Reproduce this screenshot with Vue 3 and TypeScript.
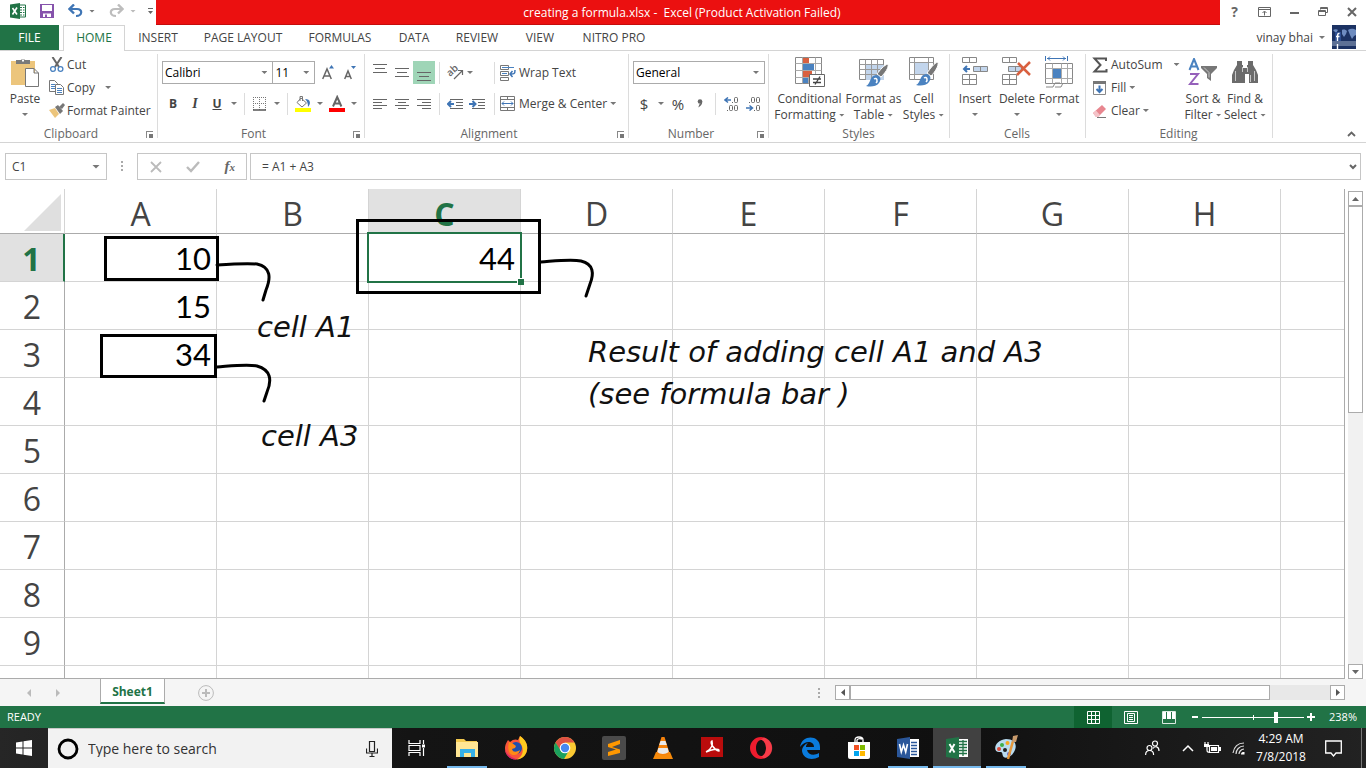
<script setup lang="ts">
import { ref } from 'vue'

const tabs = [
  { name: 'HOME', cls: 'tab-active' },
  { name: 'INSERT', cls: 'tab-m' },
  { name: 'PAGE LAYOUT', cls: 'tab-xl' },
  { name: 'FORMULAS', cls: 'tab-l' },
  { name: 'DATA', cls: 'tab-s' },
  { name: 'REVIEW', cls: 'tab-m2' },
  { name: 'VIEW', cls: 'tab-s' },
  { name: 'NITRO PRO', cls: 'tab-l' },
]
const columns = ['A', 'B', 'C', 'D', 'E', 'F', 'G', 'H', '']
const rows = [1, 2, 3, 4, 5, 6, 7, 8, 9]
const values: Record<string, string> = { A1: '10', A2: '15', A3: '34', C1: '44' }

const fontName = ref('Calibri')
const fontSize = ref('11')
const numberFormat = ref('General')
const nameBox = ref('C1')
const formula = ref('= A1 + A3')
const search = ref('')
const zoom = ref(73)
</script>

<template>
  <div class="app">
    <header class="titlebar">
      <div class="quick">
        <svg class="xl-logo" width="16" height="16" viewBox="0 0 16 16">
          <path d="M9 2h6.500v12H9z" fill="#fff" stroke="#217346" />
          <path d="M10 4.500h2M10 7h2M10 9.500h2M10 12h2M13 4.500h1.500M13 7h1.500M13 9.500h1.500M13 12h1.500" stroke="#217346" />
          <path d="M0 1.500 10 0v16L0 14.500z" fill="#217346" />
          <path d="M2.500 5 7 11.500M7 4.500 2.500 11.500" stroke="#fff" stroke-width="1.600" />
        </svg>
        <button class="plain save" aria-label="Save">
          <svg width="14" height="14" viewBox="0 0 14 14">
            <path d="M0 0h14v14H0z" fill="#8653ac" />
            <path d="M2 1h10v6H2z" fill="#fff" />
            <path d="M3 9.500h8V13H3z" fill="#fff" />
            <path d="M5 10.500h2V13H5z" fill="#8653ac" />
          </svg>
        </button>
        <button class="plain undo" aria-label="Undo">
          <svg width="15" height="14" viewBox="0 0 15 14">
            <path d="M1.500 5H9c6 0 5.500 7-1 7" fill="none" stroke="#3f75b5" stroke-width="2.200" />
            <path d="M6 .500 1.500 5 6 9.500" fill="none" stroke="#3f75b5" stroke-width="2.400" />
          </svg>
          <i class="caret"></i>
        </button>
        <button class="plain redo" aria-label="Redo">
          <svg width="15" height="14" viewBox="0 0 15 14">
            <path d="M13.500 5H6c-6 0-5.500 7 1 7" fill="none" stroke="#bdbdbd" stroke-width="2.200" />
            <path d="M9 .500 13.500 5 9 9.500" fill="none" stroke="#bdbdbd" stroke-width="2.400" />
          </svg>
          <i class="caret light"></i>
        </button>
        <button class="plain custom" aria-label="Customize Quick Access Toolbar">
          <svg width="5" height="6" viewBox="0 0 5 6"><path d="M0 0h5v1H0zM0 3h5L2.500 6z" fill="#666" /></svg>
        </button>
      </div>
      <div class="title">creating a formula.xlsx -&nbsp; Excel (Product Activation Failed)</div>
      <div class="winbtns">
        <button class="plain help" aria-label="Help">?</button>
        <button class="plain" aria-label="Ribbon display options">
          <svg width="13" height="10" viewBox="0 0 13 10"><path d="M.500.500h12v9H.500zM.500 2.500h12M6.500 8.500v-4M4.500 6l2-2 2 2" fill="none" stroke="#666" /></svg>
        </button>
        <button class="plain" aria-label="Minimize">
          <svg width="10" height="10" viewBox="0 0 10 10"><path d="M0 5h9v2H0z" fill="#666" /></svg>
        </button>
        <button class="plain" aria-label="Restore">
          <svg width="10" height="10" viewBox="0 0 10 10"><path d="M2.500 2.500v-2h7v5h-2M2.500 1.500h7M.500 3.500h7v5h-7zM.500 4.500h7" fill="none" stroke="#666" /></svg>
        </button>
        <button class="plain" aria-label="Close">
          <svg width="10" height="10" viewBox="0 0 10 10"><path d="m1 1 8 8M9 1 1 9" stroke="#666" stroke-width="2" /></svg>
        </button>
      </div>
    </header>

    <nav class="tabs">
      <button class="file">FILE</button>
      <button v-for="t in tabs" :key="t.name" class="tab" :class="t.cls">{{ t.name }}</button>
      <button class="plain user">vinay bhai <i class="caret"></i></button>
      <svg class="avatar" width="24" height="24" viewBox="0 0 24 24">
        <path d="M0 0h24v24H0z" fill="#1c3263" />
        <path d="M0 16h24v5H0z" fill="#5d7095" />
        <path d="M10 5c2-1 4 0 5 1l-1 3-2 3-2-3zM16 5c3-2 6-1 8 0v5l-2 1-2 3-2-4zM1 5c2-1 4-1 5 0L4 8z" fill="#6e8cc0" />
        <path d="M3 7h6v9H3z" fill="#2e4f91" />
        <path d="M7.500 8.500C5.500 8 5.500 9.500 5.500 16M4 11.500h3.500M5.500 19v5" stroke="#fff" stroke-width="1.400" fill="none" />
      </svg>
    </nav>

    <section class="ribbon">
      <div class="group g-clip">
        <div class="body">
          <button class="big paste">
            <span class="bigicon">
              <svg width="28" height="30" viewBox="0 0 28 30">
                <path d="M0 4h24v24H0z" fill="#ecc57c" />
                <path d="M5 3h5a2.500 2.500 0 0 1 4 0h5v4H5z" fill="#7a7a7a" />
                <path d="M11 2.500h2v2h-2z" fill="#fff" />
                <path d="M14.500 11.500H23l4.500 4.500v13.500h-13zM23 11.500V16h4.500" fill="#fff" stroke="#777" />
              </svg>
            </span>
            <span>Paste</span><i class="caret"></i>
          </button>
          <div class="list">
            <button class="small">
              <svg width="16" height="16" viewBox="0 0 16 16">
                <path d="M3.500 0 10 10M12.500 0 6 10" stroke="#666" stroke-width="2" />
                <circle cx="4" cy="12" r="2.400" fill="none" stroke="#4a82c0" stroke-width="1.300" />
                <circle cx="11.500" cy="12" r="2.400" fill="none" stroke="#4a82c0" stroke-width="1.300" />
              </svg>Cut
            </button>
            <button class="small">
              <svg width="16" height="16" viewBox="0 0 16 16">
                <path d="M.500.500h5l3 3v8h-8z" fill="#fff" stroke="#777" />
                <path d="M2 4.500h4M2 6.500h4M2 8.500h4" stroke="#4a82c0" />
                <path d="M6.500 4.500h5l3 3v7h-8z" fill="#fff" stroke="#777" />
                <path d="M8 8.500h5M8 10.500h5M8 12.500h5" stroke="#4a82c0" />
              </svg>Copy<i class="caret far"></i>
            </button>
            <button class="small">
              <svg width="16" height="16" viewBox="0 0 16 16">
                <path d="m0 7 6-2 4 6-4 4z" fill="#ecc57c" />
                <path d="m6 4 3-2 5 6-3 3z" fill="#777" />
                <path d="m10 4 4-4 2 2-3 4z" fill="#777" />
              </svg>Format Painter
            </button>
          </div>
        </div>
        <footer>Clipboard<i class="launch"></i></footer>
      </div>

      <div class="group g-font">
        <div class="body rowsbody">
          <div class="line">
            <label class="combo fontname"><select v-model="fontName" aria-label="Font"><option>Calibri</option></select><i class="caret"></i></label>
            <label class="combo fontsize"><select v-model="fontSize" aria-label="Font size"><option>11</option></select><i class="caret"></i></label>
            <button class="ic grow" aria-label="Increase font size">
              <svg width="13" height="15" viewBox="0 0 13 15"><path d="M.700 14 5 4l4.300 10M2 11h6" fill="none" stroke="#666" stroke-width="1.500" /><path d="M7 3.500 9.500 0 12 3.500z" fill="#3f75b5" /></svg>
            </button>
            <button class="ic" aria-label="Decrease font size">
              <svg width="13" height="15" viewBox="0 0 13 15"><path d="M.700 14 4 6l3.300 8M2 11.500h4" fill="none" stroke="#666" stroke-width="1.500" /><path d="M7 1h5L9.500 4z" fill="#3f75b5" /></svg>
            </button>
          </div>
          <div class="line">
            <button class="ic"><b>B</b></button>
            <button class="ic"><em>I</em></button>
            <button class="ic"><u>U</u></button>
            <i class="caret c12"></i><i class="sep"></i>
            <button class="ic" aria-label="Borders">
              <svg width="14" height="14" viewBox="0 0 14 14"><path d="M.500 0v13M6.500 0v13M12.500 0v13M0 .500h13M0 6.500h13" stroke="#777" stroke-dasharray="1 1" /><path d="M0 13h13" stroke="#555" stroke-width="1.500" /></svg>
            </button>
            <i class="caret c12"></i><i class="sep"></i>
            <button class="ic" aria-label="Fill color">
              <svg width="16" height="17" viewBox="0 0 16 17"><path d="m6 3 5.500 5L7 12 2 7.500zM5 6V1.500h2.500V6" fill="#fff" stroke="#777" /><path d="M10 4c6 0 6 5 3 8 0-4-1-6-3-8z" fill="#3f75b5" /><path d="M0 13h16v4H0z" fill="#ff0" /></svg>
            </button>
            <i class="caret c12"></i>
            <button class="ic" aria-label="Font color">
              <svg width="16" height="17" viewBox="0 0 16 17"><path d="m4 11.500 4.200-9.500 4.200 9.500M5.500 8.500h5.500" fill="none" stroke="#666" stroke-width="2" /><path d="M0 13h16v4H0z" fill="#f00" /></svg>
            </button>
            <i class="caret c12"></i>
          </div>
        </div>
        <footer>Font<i class="launch"></i></footer>
      </div>

      <div class="group g-align">
        <div class="body rowsbody">
          <div class="line">
            <button class="ic" aria-label="Top align"><svg width="14" height="17" viewBox="0 0 14 17"><path d="M0 .500h14M2 4.500h10M0 8.500h14" stroke="#666" /></svg></button>
            <button class="ic" aria-label="Middle align"><svg width="14" height="17" viewBox="0 0 14 17"><path d="M0 4.500h14M2 8.500h10M0 12.500h14" stroke="#666" /></svg></button>
            <button class="ic on" aria-label="Bottom align"><svg width="14" height="17" viewBox="0 0 14 17"><path d="M0 8.500h14M2 12.500h10M0 16.500h14" stroke="#666" /></svg></button>
            <i class="sep"></i>
            <button class="ic" aria-label="Orientation">
              <svg width="20" height="21" viewBox="0 0 20 21"><text class="ab" x="5" y="15" transform="rotate(-42 5 15)">ab</text><path d="m9 17 8-8M13 8.500h4.500V13" fill="none" stroke="#666" stroke-width="1.200" /></svg>
            </button>
            <i class="caret orient"></i><i class="gapper"></i><i class="sep"></i>
            <button class="small wide">
              <svg width="16" height="16" viewBox="0 0 16 16"><path d="M.500.500v4h8v-4H.500M.500 6.500h8v4h-8zM.500 12.500h8v3h-8z" fill="none" stroke="#777" /><path d="M2 2.500h12M2 8.500h5" stroke="#4a82c0" /><path d="M15 5c0 4-1 4-4 4M12.500 6 10 9l2.500 3" fill="none" stroke="#3f75b5" stroke-width="1.500" /></svg>Wrap Text
            </button>
          </div>
          <div class="line">
            <button class="ic" aria-label="Align left"><svg width="14" height="12" viewBox="0 0 14 12"><path d="M0 1.500h14M0 4.500h9M0 7.500h14M0 10.500h9" stroke="#666" /></svg></button>
            <button class="ic" aria-label="Center"><svg width="14" height="12" viewBox="0 0 14 12"><path d="M0 1.500h14M3 4.500h8M0 7.500h14M3 10.500h8" stroke="#666" /></svg></button>
            <button class="ic" aria-label="Align right"><svg width="14" height="12" viewBox="0 0 14 12"><path d="M0 1.500h14M5 4.500h9M0 7.500h14M5 10.500h9" stroke="#666" /></svg></button>
            <i class="sep"></i>
            <button class="ic" aria-label="Decrease indent"><svg width="16" height="12" viewBox="0 0 16 12"><path d="M3 1.500h13M9 4.500h7M9 7.500h7M3 10.500h13" stroke="#666" /><path d="M7 6H1.500M4 3 1 6l3 3" stroke="#3f75b5" stroke-width="2" fill="none" /></svg></button>
            <button class="ic" aria-label="Increase indent"><svg width="16" height="12" viewBox="0 0 16 12"><path d="M3 1.500h13M9 4.500h7M9 7.500h7M3 10.500h13" stroke="#666" /><path d="M0 6h5.500M3.500 3l3 3-3 3" stroke="#3f75b5" stroke-width="2" fill="none" /></svg></button>
            <i class="gap4"></i><i class="sep"></i>
            <button class="small wide">
              <svg width="16" height="16" viewBox="0 0 16 16"><path d="M.500.500h14v14H.500zM.500 3.500h14M.500 11.500h14M7.500.500v3M7.500 11.500v3" fill="none" stroke="#777" /><path d="M2 7.500h11M4 5.500l-2 2 2 2M11 5.500l2 2-2 2" fill="none" stroke="#3f75b5" /></svg>Merge &amp; Center
            </button>
            <i class="caret c12"></i>
          </div>
        </div>
        <footer>Alignment<i class="launch"></i></footer>
      </div>

      <div class="group g-num">
        <div class="body rowsbody">
          <div class="line">
            <label class="combo numfmt"><select v-model="numberFormat" aria-label="Number format"><option>General</option></select><i class="caret"></i></label>
          </div>
          <div class="line">
            <button class="ic sym">$</button><i class="caret c12"></i>
            <button class="ic sym">%</button>
            <button class="ic comma" aria-label="Comma style">
              <svg width="6" height="9" viewBox="0 0 6 9"><circle cx="3" cy="2.500" r="2.300" fill="#666" /><path d="M5.300 2.500c0 3-1.500 4.500-4 6l1-3z" fill="#666" /></svg>
            </button>
            <i class="sep"></i>
            <button class="ic dec" aria-label="Increase decimal">
              <svg width="15" height="14" viewBox="0 0 15 14"><path d="M7 3H1.500M4 .500 1 3l3 2.500" fill="none" stroke="#3f75b5" stroke-width="1.500" /><g fill="none" stroke="#666"><rect x="10.500" y=".500" width="3" height="5" rx="1" /><rect x="5.500" y="8.500" width="3" height="5" rx="1" /><rect x="10.500" y="8.500" width="3" height="5" rx="1" /></g><path d="M8 5h1v1H8zM3 13h1v1H3z" fill="#666" /></svg>
            </button>
            <button class="ic dec" aria-label="Decrease decimal">
              <svg width="15" height="14" viewBox="0 0 15 14"><path d="M0 11h5.500M3.500 8.500l3 2.500-3 2.500" fill="none" stroke="#3f75b5" stroke-width="1.500" /><g fill="none" stroke="#666"><rect x="5.500" y=".500" width="3" height="5" rx="1" /><rect x="10.500" y=".500" width="3" height="5" rx="1" /><rect x="10.500" y="8.500" width="3" height="5" rx="1" /></g><path d="M3 5h1v1H3zM8 13h1v1H8z" fill="#666" /></svg>
            </button>
          </div>
        </div>
        <footer>Number<i class="launch"></i></footer>
      </div>

      <div class="group g-styles">
        <div class="body">
          <button class="big b72">
            <span class="bigicon">
              <svg width="30" height="30" viewBox="0 0 30 30">
                <path d="M.500.500h26v26H.500z" fill="#fff" stroke="#888" />
                <path d="M.500 6.500h26M.500 13.500h26M.500 20.500h26M7.500.500v26M13.500.500v26M20.500.500v26" stroke="#aaa" />
                <path d="M8 1h6v5H8zM8 14h9v6H8z" fill="#d9603f" /><path d="M8 7h11v6H8zM8 21h5v5H8z" fill="#4a82c0" />
                <path d="M14.500 17.500h15v12h-15z" fill="#fff" stroke="#666" />
                <path d="M18 22h8M18 25.500h8M25 19.500l-5 8" stroke="#444" stroke-width="1.300" />
              </svg>
            </span>
            <span>Conditional</span><span>Formatting<i class="caret"></i></span>
          </button>
          <button class="big b56">
            <span class="bigicon">
              <svg width="30" height="30" viewBox="0 0 30 30">
                <path d="M.500 2.500h24v20H.500z" fill="#fff" stroke="#888" /><path d="M7 8h18v15H7z" fill="#c2d5ec" />
                <path d="M.500 7.500h24M.500 12.500h24M.500 17.500h24M6.500 2.500v20M12.500 2.500v20M18.500 2.500v20" stroke="#999" />
                <path d="M29 7c1 4-3 9-7 13l-4-3c3-4 7-9 11-10z" fill="#777" stroke="#fff" />
                <path d="M17 18c4 0 6 4 3 8-3 4-9 4-13 3 5-2 3-10 10-11z" fill="#4a82c0" /><path d="M15 22c3-2 4 2 2 4" stroke="#fff" stroke-width="1.500" fill="none" />
              </svg>
            </span>
            <span>Format as</span><span>Table<i class="caret"></i></span>
          </button>
          <button class="big b44">
            <span class="bigicon">
              <svg width="30" height="30" viewBox="0 0 30 30">
                <path d="M.500.500h24v22H.500z" fill="#fff" stroke="#888" /><path d="M.500 5.500h24M.500 17.500h24M5.500.500v22M19.500.500v22" stroke="#999" /><path d="M6 6h13v11H6z" fill="#c2d5ec" />
                <path d="M29 5c1 4-3 10-7 14l-4-3c3-4 7-10 11-11z" fill="#777" stroke="#fff" />
                <path d="M17 17c4 0 6 4 3 8-3 4-9 4-13 3 5-2 3-10 10-11z" fill="#4a82c0" /><path d="M15 21c3-2 4 2 2 4" stroke="#fff" stroke-width="1.500" fill="none" />
              </svg>
            </span>
            <span>Cell</span><span>Styles<i class="caret"></i></span>
          </button>
        </div>
        <footer>Styles</footer>
      </div>

      <div class="group g-cells">
        <div class="body">
          <button class="big b42">
            <span class="bigicon">
              <svg width="28" height="30" viewBox="0 0 28 30">
                <path d="M1.500.500h14v5h-14zM8.500.500v5M1.500 17.500h14v10h-14zM8.500 17.500v10M1.500 22.500h14" fill="#fff" stroke="#888" />
                <path d="M12.500 9.500h14v5h-14zM19.500 9.500v5" fill="#c2d5ec" stroke="#888" />
                <path d="M9 12H3M6 9l-3 3 3 3" stroke="#3f75b5" stroke-width="2" fill="none" />
              </svg>
            </span>
            <span>Insert</span><i class="caret"></i>
          </button>
          <button class="big b42">
            <span class="bigicon">
              <svg width="30" height="30" viewBox="0 0 30 30">
                <path d="M.500.500h14v5h-14zM7.500.500v5M.500 17.500h14v10h-14zM7.500 17.500v10M.500 22.500h14" fill="#fff" stroke="#888" />
                <path d="M6.500 9.500h13v5h-13zM13.500 9.500v5" fill="#c2d5ec" stroke="#888" />
                <path d="m16 6 12 12M28 5 15 18" stroke="#d9603f" stroke-width="2.500" fill="none" />
              </svg>
            </span>
            <span>Delete</span><i class="caret"></i>
          </button>
          <button class="big b42">
            <span class="bigicon">
              <svg width="28" height="32" viewBox="0 0 28 32">
                <path d="M.500 0v5M22.500 0v5M2 2.500h19M5 .500l-2 2 2 2M18 .500l2 2-2 2" stroke="#3f75b5" fill="none" />
                <path d="M.500 7.500h27v20H.500z" fill="#fff" stroke="#888" /><path d="M7.500 7.500v20M16.500 7.500v20M22.500 7.500v20M.500 12.500h27M.500 22.500h27" stroke="#aaa" />
                <path d="M8 13h8v9H8z" fill="#4a82c0" /><path d="M1 31h7l2-4h5M10 31h6l2-4" fill="none" stroke="#888" />
              </svg>
            </span>
            <span>Format</span><i class="caret"></i>
          </button>
        </div>
        <footer>Cells</footer>
      </div>

      <div class="group g-edit">
        <div class="body">
          <div class="list editlist">
            <button class="small">
              <svg width="16" height="16" viewBox="0 0 16 16"><path d="M14 4V1.500H2.500L8.500 8l-6 6.500H14.500V12" fill="none" stroke="#555" stroke-width="2" /></svg>AutoSum<i class="caret far"></i>
            </button>
            <button class="small">
              <svg width="16" height="16" viewBox="0 0 16 16"><path d="M1.500 1.500h12v13h-12z" fill="#fff" stroke="#888" /><path d="M1 1h13v3H1z" fill="#777" /><path d="M7.500 5.500V12M4.500 9l3 3 3-3" stroke="#3f75b5" stroke-width="2" fill="none" /></svg>Fill<i class="caret near"></i>
            </button>
            <button class="small">
              <svg width="16" height="16" viewBox="0 0 16 16"><path d="m1 10 9-8 4 4-8 8H4z" fill="#e8868f" /><path d="m1 10 3-2.500L8 12l-2 2H4z" fill="#f4c3c8" /><path d="M5 14.500h9" stroke="#777" /></svg>Clear<i class="caret near"></i>
            </button>
          </div>
          <button class="big b42">
            <span class="bigicon">
              <svg width="30" height="28" viewBox="0 0 30 28">
                <path d="m1.500 12 4.500-11 4.500 11M3 8.500h6" fill="none" stroke="#4a82c0" stroke-width="2" />
                <path d="M2 16h8L2 26h8.500" fill="none" stroke="#9560ba" stroke-width="2" />
                <path d="M13 8h16v2l-6 6v7l-4-3v-4l-6-6z" fill="#777" />
                <path d="m16 9.500 5 5v5" fill="none" stroke="#c6c6c6" />
              </svg>
            </span>
            <span>Sort &amp;</span><span>Filter<i class="caret"></i></span>
          </button>
          <button class="big b42">
            <span class="bigicon">
              <svg width="26" height="26" viewBox="0 0 26 26">
                <path d="M5 2h5v4h1v3h4V6h1V2h5v4l3 5 2 5v8h-9v-9h-4v9H0v-8l2-5 3-5z" fill="#6b6b6b" />
                <path d="M3.500 12v10M10.500 8v5M15.500 8v5M18.500 16v7M22.500 12v10" stroke="#c6c6c6" />
              </svg>
            </span>
            <span>Find &amp;</span><span>Select<i class="caret"></i></span>
          </button>
        </div>
        <footer>Editing</footer>
      </div>
      <button class="plain collapse" aria-label="Collapse the ribbon">
        <svg width="9" height="6" viewBox="0 0 9 6"><path d="m1 5 3.500-3.500L8 5" fill="none" stroke="#666" stroke-width="1.800" /></svg>
      </button>
    </section>

    <section class="formulabar">
      <label class="namebox"><input v-model="nameBox" aria-label="Name box" /><i class="caret big-caret"></i></label>
      <i class="dots"></i>
      <div class="fxbox">
        <button class="plain" aria-label="Cancel"><svg width="12" height="12" viewBox="0 0 12 12"><path d="m1 1 10 10M11 1 1 11" stroke="#bbb" stroke-width="1.800" /></svg></button>
        <button class="plain" aria-label="Enter"><svg width="14" height="12" viewBox="0 0 14 12"><path d="m1 6 4 4 8-9" fill="none" stroke="#bbb" stroke-width="2.400" /></svg></button>
        <button class="plain fx" aria-label="Insert function">f<small>x</small></button>
      </div>
      <label class="formula"><input v-model="formula" aria-label="Formula" />
        <svg width="8" height="6" viewBox="0 0 8 6"><path d="m1 1 3 3 3-3" fill="none" stroke="#666" stroke-width="2" /></svg>
      </label>
    </section>

    <main class="sheet">
      <div class="gridwrap">
        <table>
          <thead>
            <tr>
              <th class="corner"><svg width="37" height="37" viewBox="0 0 37 37"><path d="M37 0v37H0z" fill="#dfdfdf" /></svg></th>
              <th v-for="c in columns" :key="c" scope="col" :class="{ sel: c === 'C', rest: !c }">{{ c }}</th>
            </tr>
          </thead>
          <tbody>
            <tr v-for="r in rows" :key="r">
              <th scope="row" :class="{ sel: r === 1 }">{{ r }}</th>
              <td v-for="c in columns" :key="c" :class="{ active: c + r === 'C1' }">{{ values[c + r] }}</td>
            </tr>
            <tr>
              <th></th>
              <td v-for="c in columns" :key="c"></td>
            </tr>
          </tbody>
        </table>
        <svg class="ink" width="620" height="220" viewBox="0 0 620 220">
          <g fill="none" stroke="#000" stroke-width="3">
            <rect x="105.500" y="48.500" width="112" height="42" />
            <rect x="101.500" y="146.500" width="114" height="41" />
            <rect x="357.500" y="31.500" width="182" height="72" />
            <g stroke-linecap="round">
              <path d="M217 76c14-1 30-2 40-1 14 3 14 14 9 26l-3 10" />
              <path d="M217 178c14-1 30-3 40-1 14 4 15 14 10 26l-3 9" />
              <path d="M541 73c14-1 30-3 40-1 13 3 13 13 9 23l-4 12" />
            </g>
          </g>
        </svg>
        <p class="note n1">cell A1</p>
        <p class="note n2">cell A3</p>
        <p class="note n3">Result of adding cell A1 and A3<br />(see formula bar )</p>
      </div>
      <div class="vscroll">
        <button class="sb" aria-label="Scroll up"><svg width="7" height="4" viewBox="0 0 7 4"><path d="M3.500 0 7 4H0z" fill="#666" /></svg></button>
        <div class="vtrack"><div class="vthumb"></div></div>
        <button class="sb down" aria-label="Scroll down"><svg width="7" height="4" viewBox="0 0 7 4"><path d="M0 0h7L3.500 4z" fill="#666" /></svg></button>
      </div>
    </main>

    <section class="sheettabs">
      <button class="plain nav1" aria-label="Previous sheet"><svg width="4" height="8" viewBox="0 0 4 8"><path d="M4 0v8L0 4z" fill="#bbb" /></svg></button>
      <button class="plain nav2" aria-label="Next sheet"><svg width="4" height="8" viewBox="0 0 4 8"><path d="M0 0v8l4-4z" fill="#bbb" /></svg></button>
      <button class="sheettab">Sheet1</button>
      <button class="plain add" aria-label="New sheet"><svg width="16" height="16" viewBox="0 0 16 16"><circle cx="8" cy="8" r="7.400" fill="none" stroke="#bbb" /><path d="M8 4v8M4 8h8" stroke="#bbb" stroke-width="2" /></svg></button>
      <i class="dots"></i>
      <div class="hscroll">
        <button class="sb" aria-label="Scroll left"><svg width="4" height="7" viewBox="0 0 4 7"><path d="M4 0v7L0 3.500z" fill="#555" /></svg></button>
        <div class="hthumb"></div>
        <button class="sb right" aria-label="Scroll right"><svg width="4" height="7" viewBox="0 0 4 7"><path d="M0 0v7l4-3.500z" fill="#555" /></svg></button>
      </div>
    </section>

    <section class="status">
      <span class="ready">READY</span>
      <button class="view on" aria-label="Normal view"><svg width="13" height="13" viewBox="0 0 13 13"><path d="M.500.500h12v12H.500zM4.500.500v12M8.500.500v12M.500 4.500h12M.500 8.500h12" fill="none" stroke="#fff" /></svg></button>
      <button class="view" aria-label="Page layout view"><svg width="14" height="13" viewBox="0 0 14 13"><path d="M.500.500h13v12H.500zM3.500 2.500h7v8h-7zM5 4.500h4M5 6.500h4M5 8.500h4" fill="none" stroke="#fff" /></svg></button>
      <button class="view" aria-label="Page break preview"><svg width="14" height="13" viewBox="0 0 14 13"><path d="M.500.500h13v12H.500z" fill="none" stroke="#dceae2" /><path d="M1 1h3v7H1zM5 1h4v7H5zM10 1h3v7h-3z" fill="#fff" /></svg></button>
      <button class="plain zbtn" aria-label="Zoom out"><svg width="6" height="8" viewBox="0 0 6 8"><path d="M0 3h6v2H0z" fill="#fff" /></svg></button>
      <input v-model="zoom" class="zoom" type="range" min="0" max="100" aria-label="Zoom" />
      <button class="plain zbtn" aria-label="Zoom in"><svg width="8" height="8" viewBox="0 0 8 8"><path d="M3 0h2v3h3v2H5v3H3V5H0V3h3z" fill="#fff" /></svg></button>
      <button class="plain pct">238%</button>
    </section>

    <footer class="taskbar">
      <button class="start" aria-label="Start"><svg width="16" height="16" viewBox="0 0 16 16"><path d="M0 2.500 6.500 1.500v6H0zM7.500 1.300 16 0v7.500H7.500zM0 8.500h6.500v6L0 13.500zM7.500 8.500H16V16l-8.500-1.200z" fill="#fff" /></svg></button>
      <label class="search">
        <svg width="22" height="22" viewBox="0 0 22 22"><circle cx="11" cy="11" r="9" fill="none" stroke="#000" stroke-width="2.800" /></svg>
        <input v-model="search" placeholder="Type here to search" aria-label="Search" />
        <svg width="12" height="18" viewBox="0 0 12 18"><path d="M3.500 1.500h5v10h-5zM.500 8.500v4.500h11V8.500M6 13v3.500M3.500 16.500h5" fill="none" stroke="#222" stroke-width="1.200" /></svg>
      </label>
      <button class="app-ic tv" aria-label="Task view"><svg width="17" height="16" viewBox="0 0 17 16"><path d="M1 0v3.500h11V0M1 16v-3.500h11V16M1 5.500h11v5H1zM15.500 0v4M15.500 8v8" fill="none" stroke="#fff" stroke-width="1.200" /><path d="M14 4.500h3v3h-3z" fill="#fff" /></svg></button>
      <button class="app-ic open" aria-label="File Explorer">
        <svg width="24" height="24" viewBox="0 0 24 24"><path d="M1 3h8l2 2h11v16H1z" fill="#f3c94f" /><path d="M1 6h22v15H1z" fill="#ffe694" /><path d="M5 13h15v8h-4v-4H9v4H5z" fill="#36b0e8" /></svg>
      </button>
      <button class="app-ic" aria-label="Firefox">
        <svg width="24" height="24" viewBox="0 0 24 24">
          <path d="M1 13C1 8 3 6 4 4l2 2c3-3 6-3 8-2l2-4c6 5 8 9 7 14-1 6-6 9.500-11 9.500S1 20 1 13z" fill="#f9543b" />
          <path d="M16 0c6 4 8 9 7 14-1 6-6 9.500-10 9.500 5-3 7-8 5-13-1-3-4-5-2-10.500z" fill="#ffcb1f" />
          <circle cx="12" cy="12" r="6" fill="#1f4fae" />
          <path d="m5 6 3 1 4 3-1 2-3 1c1 4 5 3 8 1-1 4-4 5-6 5-5 0-7-6-5-13z" fill="#ff8a16" />
          <path d="M1 12c1 6 5 9 12 11.500C6 24 1 19 1 12z" fill="#d8216c" />
        </svg>
      </button>
      <button class="app-ic" aria-label="Chrome">
        <svg width="24" height="24" viewBox="0 0 24 24"><circle cx="12" cy="12" r="11" fill="#fbc932" /><path d="M2.500 6.500A11 11 0 0 1 21.500 6.500H12L7 15z" fill="#dd5144" /><path d="M2.500 6.500A11 11 0 0 0 11 23l5-8.500-7 2z" fill="#1ba15e" /><circle cx="12" cy="12" r="5.300" fill="#fff" /><circle cx="12" cy="12" r="4.200" fill="#4688f1" /></svg>
      </button>
      <button class="app-ic" aria-label="Sublime Text">
        <svg width="24" height="24" viewBox="0 0 24 24"><rect width="24" height="24" rx="2" fill="#4a4a4a" /><path d="m6 8 12-4v4l-8 3 8 2.500V17L6 20v-4l8-2.500L6 11z" fill="#ff9800" /></svg>
      </button>
      <button class="app-ic" aria-label="VLC">
        <svg width="24" height="24" viewBox="0 0 24 24"><path d="M5 16h14l3 7H2z" fill="#f58a0b" /><path d="M10.500 1h3l5 16c-3 3-10 3-13 0z" fill="#f5820b" /><path d="m9.500 5-1.300 4h7.600l-1.300-4zM7.300 12l-1 4c3 2.500 8 2.500 11.400 0l-1-4z" fill="#e9e9e9" /></svg>
      </button>
      <button class="app-ic" aria-label="Adobe Reader">
        <svg width="22" height="22" viewBox="0 0 22 22"><path d="M0 0h22v20H0z" fill="#b90c0c" /><path d="M5 15c6-3 7-8 6-11-3 1 2 9 7 10 1-3-7-2-13 1z" fill="none" stroke="#fff" stroke-width="1.400" /></svg>
      </button>
      <button class="app-ic" aria-label="Opera">
        <svg width="24" height="24" viewBox="0 0 24 24"><path d="M12 1a11 11 0 1 0 0 22 11 11 0 1 0 0-22zm0 3c3 0 5 4 5 8s-2 8-5 8-5-4-5-8 2-8 5-8z" fill="#ee1c2e" /><path d="M15 1.500c11 3 11 18 0 21-1-1-3-2-3-2.500 3 0 5-4 5-8s-2-8-5-8c0-.500 2-2 3-2.500z" fill="#ff5a62" opacity=".5" /></svg>
      </button>
      <button class="app-ic" aria-label="Edge">
        <svg width="24" height="24" viewBox="0 0 24 24"><path d="M2 11C4-2 22-1 22 11v3H9c1 5 7 6 12 3v4c-7 4-16 2-17-6 0-4 3-7 6-8-2 2-2 3-2 4h8c0-6-9-7-14 0z" fill="#0a7bdc" /></svg>
      </button>
      <button class="app-ic" aria-label="Microsoft Store">
        <svg width="24" height="24" viewBox="0 0 24 24"><path d="M8 7V4q0-3 4-3 4 0 4 3v3M10 7V4q1-2 5-1" fill="none" stroke="#fff" stroke-width="1.300" /><path d="M1 6h22v15a2 2 0 0 1-2 2H3a2 2 0 0 1-2-2z" fill="#fff" /><path d="M7 9h5v5H7z" fill="#f25022" /><path d="M13 9h5v5h-5z" fill="#7fba00" /><path d="M7 15h5v5H7z" fill="#00a4ef" /><path d="M13 15h5v5h-5z" fill="#ffb900" /></svg>
      </button>
      <button class="app-ic open" aria-label="Word">
        <svg width="24" height="24" viewBox="0 0 24 24"><path d="M11 3h12v18H11z" fill="#fff" /><path d="M15 6.500h6M15 9.500h6M15 12.500h6M15 15.500h6M15 18.500h6" stroke="#2b579a" stroke-width="1.300" /><path d="M1 3 14 1v22L1 21z" fill="#2b579a" /><path d="m3.500 8 1.800 8L7.500 9l2.200 7 1.800-8" fill="none" stroke="#fff" stroke-width="1.600" /></svg>
      </button>
      <button class="app-ic current" aria-label="Excel">
        <svg width="24" height="24" viewBox="0 0 24 24"><path d="M12 3h11v18H12z" fill="#fff" /><path d="M14 5.500h8M14 8.500h8M14 11.500h8M14 14.500h8M14 17.500h8M18 4v16" stroke="#217346" stroke-width="1.300" /><path d="M1 3 14 1v22L1 21z" fill="#217346" /><path d="m4.500 8 5 8.500M9.500 8l-5 8.500" stroke="#fff" stroke-width="1.900" /></svg>
      </button>
      <button class="app-ic open" aria-label="Paint">
        <svg width="26" height="26" viewBox="0 0 26 26"><path d="M13 4c9 0 12 6 8 13-3 6-10 7-11 4-1-2 0-4-3-4-8 1-6-12 6-13z" fill="#b9dcf1" /><circle cx="9" cy="10" r="2" fill="#3fae49" /><circle cx="14.500" cy="8" r="2" fill="#f7a823" /><circle cx="6" cy="14" r="2" fill="#dc4a3a" /><circle cx="12" cy="15" r="2" fill="#222" /><circle cx="16" cy="19" r="2" fill="#6a66c8" /><path d="M15 24 20 6" stroke="#e5973a" stroke-width="2.500" /><path d="m19 7 1-6 5-1-2 7z" fill="#c99b6d" /></svg>
      </button>
      <div class="tray">
        <svg class="people" width="15" height="16" viewBox="0 0 15 16"><g fill="none" stroke="#fff" stroke-width="1.200"><circle cx="4.500" cy="8" r="2.500" /><path d="M.600 15c0-6 8-6 8 0" /><circle cx="10" cy="3.500" r="2.500" /><path d="M8 8.500c2-3 6-2 6 2.500" /></g></svg>
        <svg class="chev" width="12" height="8" viewBox="0 0 12 8"><path d="m1 7 5-5 5 5" fill="none" stroke="#fff" stroke-width="1.500" /></svg>
        <svg class="batt" width="17" height="12" viewBox="0 0 17 12"><path d="M5.500 3.500h9v7h-9zM3 5v3c0 3 2 2 3 2M1 0v2M4 0v2" fill="none" stroke="#fff" stroke-width="1.200" /><path d="M0 2h5v3H0zM7 5h6v4H7zM15 5h2v4h-2z" fill="#fff" /></svg>
        <svg class="wifi" width="13" height="13" viewBox="0 0 13 13"><g fill="none" stroke="#ddd" stroke-width="1.200"><path d="M1 11C2 5 6 1 12 1M4 12c0-4 3-8 8-8M7 12c0-2 2-5 5-5" /></g><path d="M9 12.500c0-2 1-2.500 3.500-2.500v2.500z" fill="#fff" /></svg>
        <div class="clock"><time>4:29 AM</time><time>7/8/2018</time></div>
        <svg class="action" width="17" height="17" viewBox="0 0 17 17"><path d="M.700 1h15.600v12H11l-2.500 3L6 13H.700z" fill="none" stroke="#fff" stroke-width="1.300" /></svg>
      </div>
    </footer>
  </div>
</template>

<style>
html, body { margin: 0; background: #fff; }
</style>

<style scoped>
.app {
  height: 100vh;
  padding-right: 4px;
  box-sizing: border-box;
  display: flex;
  flex-direction: column;
  overflow: hidden;
  font: 12px/16px "Open Sans", "Noto Sans", sans-serif;
  color: #444;
  white-space: nowrap;
}
*, *::before, *::after { box-sizing: border-box; }
button, input, select { font: inherit; color: inherit; margin: 0; padding: 0; border: 0; background: none; border-radius: 0; outline: 0; }
button { display: flex; align-items: center; justify-content: center; }
svg { flex: none; display: block; }
i { font-style: normal; flex: none; }
.caret { display: block; width: 6px; height: 3px; background: #777; clip-path: polygon(0 0, 100% 0, 50% 100%); }
.caret.light { background: #bbb; }
.caret.big-caret { width: 8px; height: 4px; }

.titlebar { display: flex; height: 25px; flex: none; }
.quick { width: 156px; display: flex; align-items: center; padding: 0 3px 3px 10px; flex: none; }
.save { margin-left: 14px; }
.undo { margin-left: 14px; gap: 6px; }
.redo { margin-left: 14px; gap: 6px; }
.custom { margin-left: 12px; }
.title { flex: 1; background: #eb1010; border-bottom: 1px solid #c50c0c; color: #fff; text-align: center; line-height: 25px; padding-right: 12px; }
.winbtns { width: 146px; display: flex; align-items: center; padding: 0 9px 2px 10px; justify-content: space-between; flex: none; }
.help { font-size: 14px; font-weight: 700; color: #666; width: 9px; }

.tabs { display: flex; height: 26px; flex: none; border-bottom: 1px solid #d4d4d4; }
.file { width: 59px; height: 25px; background: #217346; color: #fff; margin-right: 4px; }
.tab { height: 25px; }
.tab-active { width: 62px; height: 26px; border: 1px solid #d4d4d4; border-bottom: 0; color: #217346; background: #fff; padding-bottom: 2px; }
.tab-m { width: 66px; }
.tab-m2 { width: 68px; }
.tab-xl { width: 104px; }
.tab-l { width: 90px; }
.tab-s { width: 58px; }
.user { margin-left: auto; gap: 6px; }
.avatar { margin: 0 10px 0 7px; }

.ribbon { display: flex; height: 92px; flex: none; border-bottom: 1px solid #d4d4d4; position: relative; }
.group { display: flex; flex-direction: column; position: relative; flex: none; }
.group::after { content: ""; position: absolute; right: 0; top: 3px; bottom: 4px; width: 1px; background: #dcdcdc; }
.group footer { height: 16px; text-align: center; color: #666; padding-right: 16px; }
.g-clip { width: 158px; }
.g-font { width: 207px; }
.g-align { width: 264px; }
.g-num { width: 140px; }
.g-styles { width: 181px; }
.g-cells { width: 136px; }
.g-edit { width: 187px; }
.group.g-styles footer, .group.g-cells footer, .group.g-edit footer { padding-right: 2px; }
.launch { position: absolute; right: 5px; bottom: 4px; width: 7px; height: 7px; border: solid #888; border-width: 1px 0 0 1px; background: linear-gradient(#777, #777) 100% 100% / 4px 4px no-repeat; }
.body { height: 76px; display: flex; padding: 2px 4px 0; }
.rowsbody { flex-direction: column; padding-top: 10px; gap: 8px; }
.line { display: flex; height: 23px; align-items: center; }
.list { display: flex; flex-direction: column; }
.small { height: 23px; gap: 2px; justify-content: flex-start; }
.list .small .caret { margin-left: 2px; }
.list .small .caret.far { margin-left: 8px; }
.list .small .caret.near { margin-left: 0; }
.small.wide { margin-left: 1px; gap: 3px; }
.big { flex-direction: column; justify-content: flex-start; }
.big span { display: flex; align-items: center; justify-content: center; gap: 3px; }
.big .bigicon { height: 38px; }
.big > .caret { margin-top: 6px; }
.paste { width: 42px; margin-right: 3px; }
.b72 { width: 73px; }
.b56 { width: 55px; }
.b44 { width: 45px; }
.b42 { width: 42px; }
.editlist { width: 92px; padding-left: 2px; }
.editlist .small { gap: 3px; }

.combo { height: 23px; border: 1px solid #ababab; display: flex; align-items: center; position: relative; color: #000; }
.combo select { appearance: none; width: 100%; height: 21px; padding-left: 2px; }
.combo .caret { position: absolute; right: 5px; top: 9px; pointer-events: none; }
.fontname { width: 112px; }
.fontsize { width: 42px; border-left: 0; }
.numfmt { width: 132px; }
.ic { width: 22px; height: 23px; }
.ic.grow { margin-left: 2px; }
.ic b, .ic u { font-weight: 700; }
.ic em { font-family: "Liberation Serif", serif; font-size: 14px; font-weight: 700; }
.ic.on { background: #9fd5b7; }
.ic.sym { font-size: 15px; }
.ab { font-size: 10px; font-weight: 600; fill: #666; }
svg:has(.ab) { overflow: visible; }
.sep { width: 1px; height: 22px; background: #dcdcdc; margin: 0 4px; }
.c12 { margin: 0 3px; }
.orient { margin: 0 4px 0 1px; }
.gapper { width: 13px; }
.gap4 { width: 2px; }
.collapse { position: absolute; right: 10px; bottom: 5px; }

.formulabar { display: flex; margin: 10px 5px 0; height: 27px; flex: none; }
.namebox, .fxbox, .formula { border: 1px solid #c6c6c6; display: flex; align-items: center; }
.namebox { width: 102px; padding: 0 6px; }
.namebox input { width: 80px; flex: 1; }
.dots { width: 2px; height: 10px; background: repeating-linear-gradient(#aaa 0 2px, transparent 2px 4px); }
.formulabar .dots { margin: 8px 15px 0 14px; }
.fxbox { width: 110px; margin-right: 3px; padding: 0 11px 0 12px; justify-content: space-between; margin-left: -1px; }
.fx { font: italic 700 15px "Liberation Serif", serif; color: #666; }
.fx small { font-size: 11px; }
.formula { flex: 1; padding: 0 3px 0 11px; }
.formula input { flex: 1; min-width: 0; }

.sheet { flex: 1; min-height: 0; display: flex; margin-top: 9px; }
.gridwrap { flex: 1; min-width: 0; overflow: hidden; position: relative; border-right: 1px solid #ababab; border-bottom: 1px solid #ababab; }
table { border-collapse: separate; border-spacing: 0; table-layout: fixed; width: 100%; }
th, td { height: 48px; padding: 0; border: solid #d4d4d4; border-width: 0 1px 1px 0; overflow: visible; }
th { font-size: 32px; line-height: 40px; font-weight: 400; color: #444; text-align: center; padding-top: 2px; }
thead th { width: 152px; height: 45px; line-height: 38px; border-bottom-color: #ababab; padding-top: 6px; }
thead th.corner { width: 65px; padding: 0 4px 2px 24px; vertical-align: bottom; }
thead th.rest { width: auto; border-right: 0; }
tr > :last-child { border-right: 0; }
tbody th { border-right-color: #ababab; }
th.sel { background: #e1e1e1; color: #217346; font-weight: 700; }
tbody th.sel { border-right: 2px solid #217346; }
td { font: 31px/40px Lato, sans-serif; color: #000; text-align: right; padding-right: 5px; position: relative; }
td.active::before { content: ""; position: absolute; inset: -2px -2px -2px -2px; border: 2px solid #217346; z-index: 1; }
td.active::after { content: ""; position: absolute; right: -4px; bottom: -4px; width: 7px; height: 7px; background: #217346; border: solid #fff; border-width: 1px 0 0 1px; z-index: 2; }
.ink { position: absolute; left: 0; top: 0; z-index: 3; }
.note { position: absolute; margin: 0; font: italic 29px/42px "DejaVu Sans", sans-serif; color: #111; z-index: 3; }
.n1 { left: 257px; top: 117px; }
.n2 { left: 261px; top: 226px; }
.n3 { left: 588px; top: 142px; }

.vscroll { width: 21px; padding: 2px 4px 0 3px; display: flex; flex-direction: column; flex: none; }
.sb { width: 15px; height: 15px; border: 1px solid #ababab; background: #fff; flex: none; }
.vtrack { flex: 1; margin-right: -1px; width: 15px; background: #f1f1f1; }
.vthumb { height: 207px; border: 1px solid #ababab; background: #fff; }

.sheettabs { display: flex; align-items: center; height: 27px; flex: none; background: #f5f5f5; }
.nav1 { margin-left: 27px; }
.nav2 { margin-left: 25px; }
.sheettab { width: 65px; height: 25px; margin: -3px 0 0 40px; padding-top: 3px; background: #fff; border: 1px solid #ababab; border-top: 0; border-bottom: 2px solid #217346; color: #217346; font-weight: 700; }
.add { margin-left: 33px; }
.sheettabs .dots { margin-left: auto; margin-right: 15px; }
.hscroll { width: 510px; height: 15px; margin-right: 21px; display: flex; background: #e8e8e8; }
.hthumb { width: 420px; border: 1px solid #ababab; background: #fff; }
.sb.right { margin-left: auto; }

.status { height: 22px; flex: none; display: flex; align-items: center; background: #217346; color: #fff; font-size: 11px; }
.ready { margin: 0 auto 0 7px; }
.view { width: 38px; height: 22px; }
.view.on { background: #0f6331; }
.zbtn { width: 14px; height: 22px; }
.zoom { appearance: none; width: 102px; height: 22px; background: linear-gradient(#fff, #fff) 50% 50% / 1px 5px no-repeat, linear-gradient(#fff, #fff) 50% 50% / 100% 1px no-repeat; }
.zoom::-webkit-slider-thumb { appearance: none; width: 4px; height: 11px; background: #fff; }
.pct { margin: 0 9px 0 11px; }

.taskbar { height: 40px; flex: none; display: flex; background: linear-gradient(90deg, #262626, #141414 30%, #101010 70%, #222); color: #fff; }
.start { width: 48px; flex: none; }
.search { width: 344px; flex: none; background: #f2f2f2; display: flex; align-items: center; padding: 0 14px 0 9px; border-top: 1px solid #c8c8c8; }
.search input { flex: 1; min-width: 0; margin-left: 9px; font-size: 14px; color: #333; }
.search input::placeholder { color: #333; opacity: 1; }
.app-ic { width: 48px; height: 40px; margin-right: 1px; flex: none; position: relative; }
.tv { margin-right: 3px; }
.open::after, .current::after { content: ""; position: absolute; left: 4px; right: 4px; bottom: 0; height: 2px; background: #76b9ed; }
.current { background: #414141; }
.current::after { left: 0; right: 0; }
.tray { margin-left: auto; display: flex; align-items: center; padding-right: 19px; border-right: 1px solid #777; margin-right: 4px; }
.chev { margin-left: 22px; }
.batt { margin-left: 10px; }
.wifi { margin-left: 11px; }
.clock { display: flex; flex-direction: column; align-items: center; width: 58px; margin: 0 15px 0 7px; line-height: 18px; font-size: 12px; }
</style>
